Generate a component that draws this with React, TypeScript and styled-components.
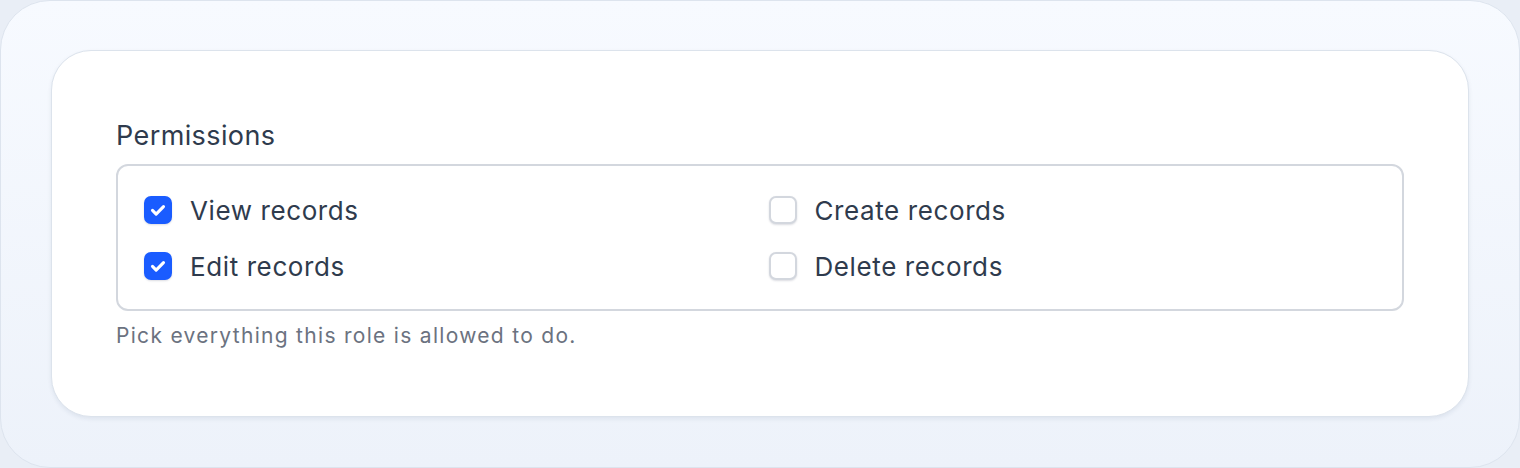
import { FC } from 'react'
import styled, { createGlobalStyle } from 'styled-components'

const GlobalStyle = createGlobalStyle`
  html, body {
    margin: 0;
    padding: 0;
    background: #e9eef6;
  }
  body {
    font-family: Inter, 'Noto Sans', 'Liberation Sans', sans-serif;
    -webkit-font-smoothing: antialiased;
  }
  * {
    box-sizing: border-box;
  }
`

interface Permission {
  id: string
  label: string
  checked: boolean
}

const permissions: Permission[] = [
  { id: 'view', label: 'View records', checked: true },
  { id: 'create', label: 'Create records', checked: false },
  { id: 'edit', label: 'Edit records', checked: true },
  { id: 'delete', label: 'Delete records', checked: false }
]

const CheckIcon: FC = () => (
  <svg width="22" height="22" viewBox="0 0 20 20" fill="none">
    <path d="M5 10.4l3.3 3.3L15 7" stroke="#fff" strokeWidth="2.8" strokeLinecap="round" strokeLinejoin="round" />
  </svg>
)

const App: FC = () => {
  return (
    <>
      <GlobalStyle />
      <Frame>
        <Card>
          <Field>
            <Legend>Permissions</Legend>
            <OptionBox>
              {permissions.map((p) => (
                <Option key={p.id}>
                  <Box $checked={p.checked}>{p.checked && <CheckIcon />}</Box>
                  <OptionLabel>{p.label}</OptionLabel>
                </Option>
              ))}
            </OptionBox>
            <Hint>Pick everything this role is allowed to do.</Hint>
          </Field>
        </Card>
      </Frame>
    </>
  )
}

const Frame = styled.div`
  width: 1520px;
  height: 468px;
  padding: 49px 50px 50px 50px;
  border: 1px solid #dde4ee;
  border-radius: 50px;
  background: linear-gradient(180deg, #f7faff 0%, #edf2fa 100%);
`

const Card = styled.div`
  height: 367px;
  background: #ffffff;
  border: 1px solid #dce3ec;
  border-radius: 40px;
  box-shadow: 0 2px 4px rgba(30, 50, 90, 0.08);
  padding: 71px 64px 0 64px;
`

const Field = styled.div`
  display: flex;
  flex-direction: column;
`

const Legend = styled.div`
  font-size: 27px;
  line-height: 28px;
  letter-spacing: 0.4px;
  color: #2f3b4d;
  margin-bottom: 14px;
`

const OptionBox = styled.div`
  display: grid;
  grid-template-columns: 1fr 1fr;
  column-gap: 16px;
  row-gap: 20px;
  padding: 26px 25px 25px 26px;
  border: 2px solid #d3d7de;
  border-radius: 12px;
`

const Option = styled.label`
  display: flex;
  align-items: center;
  gap: 18px;
  height: 36px;
`

const Box = styled.span<{ $checked: boolean }>`
  width: 28px;
  height: 28px;
  flex-shrink: 0;
  display: flex;
  align-items: center;
  justify-content: center;
  border-radius: 7px;
  background: ${(p) => (p.$checked ? '#1a5cff' : '#ffffff')};
  border: 2px solid ${(p) => (p.$checked ? '#1a5cff' : '#d3d7de')};
  box-shadow: 0 1px 2px rgba(20, 30, 60, 0.15);
`

const OptionLabel = styled.span`
  font-size: 26px;
  letter-spacing: 0.6px;
  color: #2f3b4d;
`

const Hint = styled.div`
  margin-top: 12px;
  font-size: 21px;
  line-height: 26px;
  letter-spacing: 1.3px;
  color: #6b7280;
`

export default App
